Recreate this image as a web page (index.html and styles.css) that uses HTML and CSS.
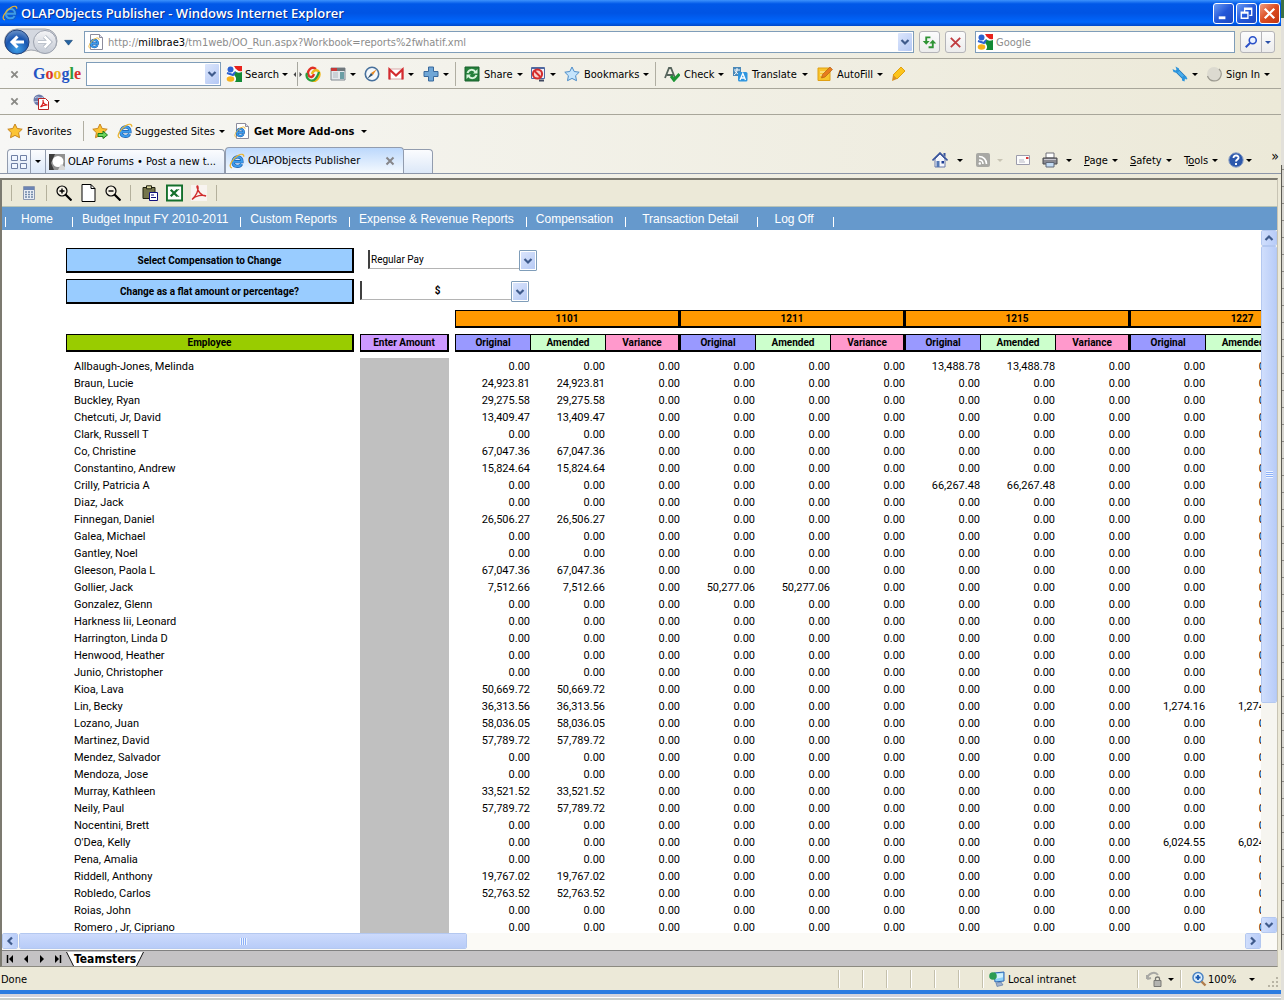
FILE: index.html
```html
<!DOCTYPE html>
<html lang="en">
<head>
    <meta charset="UTF-8">
    <title>OLAPObjects Publisher</title>
    <link rel="stylesheet" href="styles.css">
</head>
<body>
    <svg class="sprite" aria-hidden="true">
        <symbol id="i-ie" viewBox="0 0 16 16">
            <path d="M3.800 8.700h9.200c.3-6.400-8.700-6.400-9 0-.2 5.300 6.500 6 8.600 2.300" fill="none" stroke="#1c5cac" stroke-width="3.200"/>
            <path d="M3.800 8.700h9.200c.3-6.400-8.700-6.400-9 0-.2 5.300 6.500 6 8.600 2.300" fill="none" stroke="#3c9cec" stroke-width="2"/>
            <path d="M3 14.800C-1.500 14.500 3 6 9 2.500c3-1.800 6-1.800 5.800 1.200" fill="none" stroke="#ecb42c" stroke-width="1.200"/>
        </symbol>
        <symbol id="i-iepage" viewBox="0 0 16 16">
            <path d="M2.500.5h9l3 3v12h-12z" fill="#fff" stroke="#8c8c9c"/>
            <path d="M11.500.5v3h3" fill="#dde" stroke="#8c8c9c"/>
            <use href="#i-ie" x="0" y="3" width="12" height="12"/>
        </symbol>
        <symbol id="i-goog" viewBox="0 0 16 16">
            <path d="M1 1h14v14H1z" fill="#fff"/>
            <path d="M8 0h8v5c-3 1-6-1-8-5z" fill="#e8221c"/>
            <path d="M9 5c2 2 4 2 7 1v10H9c2-3 1-5-1-7z" fill="#128a36"/>
            <circle cx="4.500" cy="3.500" r="3" fill="#2b62d0"/>
            <path d="M1 7l6 2 2-3" fill="none" stroke="#2b62d0" stroke-width="2"/>
            <ellipse cx="4.500" cy="13" rx="3.800" ry="2.700" fill="#f6b21c"/>
        </symbol>
        <symbol id="i-star" viewBox="0 0 16 16">
            <path d="M8 1l2.200 4.500 5 .7-3.600 3.500.9 5L8 12.400l-4.500 2.300.9-5L.8 6.200l5-.7z"/>
        </symbol>
        <symbol id="i-x" viewBox="0 0 10 10">
            <path d="M1.500 1.500l7 7m0-7l-7 7" fill="none" stroke="currentColor" stroke-width="2"/>
        </symbol>
        <symbol id="i-chev" viewBox="0 0 10 10">
            <path d="M1.500 3L5 6.500 8.500 3" fill="none" stroke="#3f5b8c" stroke-width="2.200"/>
        </symbol>
    </svg>

    <div class="window">
        <header class="titlebar">
            <svg class="icon"><use href="#i-ie"/></svg>
            <h1>OLAPObjects Publisher - Windows Internet Explorer</h1>
            <button class="win-btn" aria-label="Minimize"><svg viewBox="0 0 20 20"><path d="M5 13h7v3H5z" fill="#fff"/></svg></button>
            <button class="win-btn" aria-label="Restore"><svg viewBox="0 0 20 20"><path d="M8 8V4.500h7.500V12H13M8 5.500h7.500M4.500 8.500h7V15h-7zM4.500 9.500h7" fill="none" stroke="#fff" stroke-width="1.400"/></svg></button>
            <button class="win-btn win-close" aria-label="Close"><svg viewBox="0 0 20 20"><path d="M5 5l10 10M15 5L5 15" fill="none" stroke="#fff" stroke-width="2.400"/></svg></button>
        </header>

        <div class="address-row">
            <div class="travel">
                <svg viewBox="0 0 56 28" aria-hidden="true">
                    <defs>
                        <radialGradient id="back-fill" cx=".5" cy=".8" r=".8"><stop offset="0" stop-color="#3fa0e8"/><stop offset=".6" stop-color="#1a56b0"/><stop offset="1" stop-color="#6d94c8"/></radialGradient>
                        <linearGradient id="fwd-fill" x2="0" y2="1"><stop offset="0" stop-color="#f4f4f6"/><stop offset="1" stop-color="#c4cad4"/></linearGradient>
                    </defs>
                    <path d="M14 1h28a12 12 0 010 24c-6 0-8-3-14-3s-8 4-14 4a12 12 0 010-25z" fill="#d4d8e0" stroke="#a0a4ac"/>
                    <circle cx="14" cy="14" r="12" fill="url(#back-fill)" stroke="#24447c"/>
                    <circle cx="42" cy="14" r="11.500" fill="url(#fwd-fill)" stroke="#9ca2ae"/>
                    <path d="M21 14H9m5.500-5.500L9 14l5.500 5.500" fill="none" stroke="#fff" stroke-width="3"/>
                    <path d="M35 14h12m-5.500-5.500L47 14l-5.500 5.500" fill="none" stroke="#a8b0bc" stroke-width="4"/>
                    <path d="M35 14h12m-5.500-5.500L47 14l-5.500 5.500" fill="none" stroke="#fff" stroke-width="2.500"/>
                </svg>
            </div>
            <button class="travel-menu" aria-label="Recent pages"><svg viewBox="0 0 10 8"><path d="M.5 1.500h9L5 7z" fill="#2464a4" stroke="#14406c" stroke-width=".6"/></svg></button>
            <div class="field address">
                <svg class="icon"><use href="#i-iepage"/></svg>
                <a class="url" href="#">http://<b>millbrae3</b>/tm1web/OO_Run.aspx?Workbook=reports%2fwhatif.xml</a>
                <button class="drop" aria-label="Show addresses"><svg><use href="#i-chev"/></svg></button>
            </div>
            <button class="tool-btn" aria-label="Refresh"><svg viewBox="0 0 16 16"><path d="M9 2.500H4.500V8M7 13h4.500V8" fill="none" stroke="#2f9434" stroke-width="2"/><path d="M.8 6.500h7.400L4.500 10.500zM7.800 9h7.400L11.500 5z" fill="#2f9434"/></svg></button>
            <button class="tool-btn" aria-label="Stop"><svg viewBox="0 0 16 16"><path d="M3 3l10 10M13 3L3 13" fill="none" stroke="#c03c40" stroke-width="2"/></svg></button>
            <label class="field search">
                <svg class="icon"><use href="#i-goog"/></svg>
                <input type="text" placeholder="Google" aria-label="Search Google">
            </label>
            <div class="search-go">
                <button aria-label="Search"><svg viewBox="0 0 16 16"><circle cx="10" cy="6" r="4" fill="#eaf2ff" stroke="#2a50c8" stroke-width="1.800"/><path d="M7 9l-5 5" stroke="#2a50c8" stroke-width="2.400"/></svg></button>
                <button aria-label="Search options"><i class="caret blue"></i></button>
            </div>
        </div>

        <div class="google-bar">
            <button class="close-x" aria-label="Close toolbar"><svg><use href="#i-x"/></svg></button>
            <span class="logo"><i class="b">G</i><i class="r">o</i><i class="y">o</i><i class="b">g</i><i class="g">l</i><i class="r">e</i></span>
            <div class="field google-field">
                <input type="text" aria-label="Google search">
                <button class="drop" aria-label="Search history"><svg><use href="#i-chev"/></svg></button>
            </div>
            <button class="item find"><svg class="icon"><use href="#i-goog"/></svg>Search<i class="caret"></i></button>
            <span class="grabber"><svg viewBox="0 0 10 24"><path d="M4.500 0v24" stroke="#a8a8a0"/><path d="M3 10v5L.5 12.500zM6.500 10v5L9 12.500z" fill="#444"/></svg></span>
            <button class="item" aria-label="Chrome"><svg class="icon" viewBox="0 0 16 16"><path d="M11 3C6-1 1 6 4 10c2 2 4 1 5-2" fill="none" stroke="#e03024" stroke-width="2.400"/><path d="M7 8c1-4 5-5 7-2 2 5-3 10-7 9" fill="none" stroke="#f0b818" stroke-width="2.400"/><path d="M2 7c-2 5 3 9 7 7 3-2 4-5 5-8" fill="none" stroke="#2a9c3c" stroke-width="2.200"/></svg></button>
            <button class="item" aria-label="Sidebar"><svg class="icon" viewBox="0 0 16 16"><path d="M1 2h14v12H1z" fill="#e4e8ec" stroke="#808890"/><path d="M1 2h14v3H1z" fill="#70787c"/><path d="M1 2h6v3H1z" fill="#c83838"/><path d="M10 6h4v7h-4z" fill="#6c9ea4"/><path d="M3 7h5M3 9h5M3 11h5" stroke="#b0b8c0"/></svg><i class="caret"></i></button>
            <button class="item" aria-label="Web history"><svg class="icon" viewBox="0 0 16 16"><circle cx="8" cy="8" r="6.700" fill="#f4f8fc" stroke="#47709c" stroke-width="1.600"/><path d="M12.500 3.500L9 9 7 7z" fill="#e88820"/><path d="M3.500 12.500L9 9 7 7z" fill="#30506c"/></svg></button>
            <button class="item" aria-label="Gmail"><svg class="icon" viewBox="0 0 16 16"><path d="M1 3h14v10H1z" fill="#fff" stroke="#d8a8a8"/><path d="M1.500 13.500V3.500L8 9.500l6.500-6v10" fill="none" stroke="#d42c30" stroke-width="2.200"/></svg><i class="caret"></i></button>
            <button class="item sep" aria-label="Add gadget"><svg class="icon" viewBox="0 0 16 16"><path d="M5.500 1h5v4.500H15v5h-4.500V15h-5v-4.500H1v-5h4.500z" fill="#6fa6d6" stroke="#39699c"/></svg><i class="caret"></i></button>
            <button class="item"><svg class="icon" viewBox="0 0 16 16"><path d="M1 1h14v14H1z" fill="#24803c" stroke="#18602c"/><path d="M3.500 7c1.500-4 6-4 8-1M12.500 9c-1.500 4-6 4-8 1" fill="none" stroke="#d8f4dc" stroke-width="2"/><path d="M13.500 3v4.500H9zM2.500 13V8.500H7z" fill="#d8f4dc"/></svg>Share<i class="caret"></i></button>
            <button class="item" aria-label="Popup blocker"><svg class="icon" viewBox="0 0 16 16"><path d="M1.500 1.500h13v11h-13z" fill="#f0f0f8" stroke="#5068a0"/><path d="M2 1h12v2H2z" fill="#5068a0"/><circle cx="7.500" cy="8" r="4.600" fill="#f8d0cc" stroke="#d42c2c" stroke-width="2"/><path d="M4.500 5l6 6" stroke="#d42c2c" stroke-width="2"/><path d="M9 14.500h5" stroke="#404860" stroke-width="2"/></svg><i class="caret"></i></button>
            <button class="item sep"><svg class="icon star-blue"><use href="#i-star"/></svg>Bookmarks<i class="caret"></i></button>
            <button class="item"><svg class="icon" viewBox="0 0 16 16"><path d="M1 12L5 2h2l4 10M3 9h6" fill="none" stroke="#56645c" stroke-width="1.800"/><path d="M7 10l3 4 5.500-6" fill="none" stroke="#1c9434" stroke-width="3"/></svg>Check<i class="caret"></i></button>
            <button class="item"><svg class="icon" viewBox="0 0 16 16"><path d="M1 1h8v9H1z" fill="#4a88b8"/><path d="M2 4h6M5 2v2c0 3-2 4-3 5M3 5c1 2 3 3 5 4" fill="none" stroke="#fff"/><rect x="6" y="6" width="9.500" height="9.500" rx="1.500" fill="#2e96e0"/><path d="M8 14l2.800-6.500L13.500 14M9 12h3.500" fill="none" stroke="#fff" stroke-width="1.300"/></svg>Translate<i class="caret"></i></button>
            <button class="item"><svg class="icon" viewBox="0 0 16 16"><path d="M1 2h12v12.500H1z" fill="#f8c42c" stroke="#e0a014"/><path d="M3 6h5M3 9h3" stroke="#fff4c0"/><path d="M4.500 12l1-3.500 7.500-7.500 2.500 2.500L8 11z" fill="#e87c1c" stroke="#a85810" stroke-width=".6"/></svg>AutoFill<i class="caret"></i></button>
            <button class="item" aria-label="Highlight"><svg class="icon" viewBox="0 0 16 16"><path d="M3 9l8-8 4 4-8 8z" fill="#fcc41c" stroke="#e0a010"/><path d="M3 9l4 4-5 2z" fill="#d89024"/></svg></button>
            <button class="item" aria-label="Options"><svg class="icon" viewBox="0 0 16 16"><path d="M5 4.500l7 7" stroke="#2474b4" stroke-width="4.500"/><path d="M5 4.500l7 7" stroke="#48acec" stroke-width="3"/><path d="M3.500.5l3.500 2v3L5 7 1.500 6 .5 3l3 1.500 1-1zM11 10h3l1.500 3-1.500.5-1-1-.5 3-2.500-1V12z" fill="#2c94dc"/></svg><i class="caret"></i></button>
            <button class="item"><svg class="icon" viewBox="0 0 16 16"><circle cx="8" cy="8" r="7" fill="#dcdad0"/><path d="M1.500 10A7 7 0 0014.500 11 7 7 0 0013 3" fill="none" stroke="#9c9a90" stroke-width="1.200"/></svg>Sign In<i class="caret"></i></button>
        </div>

        <div class="pdf-bar">
            <button class="close-x" aria-label="Close toolbar"><svg><use href="#i-x"/></svg></button>
            <button class="item" aria-label="Convert to PDF"><svg class="icon" viewBox="0 0 16 16"><circle cx="6" cy="6" r="5.500" fill="#6c7cac"/><path d="M2 4c3-3 5 2 8-1M1 8c3-1 5 0 8 0" fill="none" stroke="#c4d0e8"/><path d="M5.500 4.500h7l3 3v8h-10z" fill="#fff" stroke="#b82424"/><path d="M7.500 13c2-2 3-5 2.500-7 0 4 2 5 4.500 5-3 0-5 .5-7 2z" fill="none" stroke="#d81c1c" stroke-width="1.200"/></svg><i class="caret"></i></button>
        </div>

        <div class="favorites">
            <button class="item sep fav"><svg class="icon star-gold"><use href="#i-star"/></svg>Favorites</button>
            <button class="item" aria-label="Add to favorites"><svg class="icon star-gold" viewBox="0 0 16 16"><use href="#i-star" width="16" height="16"/><path d="M6 10.500h5V8l4.500 4-4.500 3.500v-2H6z" fill="#6cd45c" stroke="#1c7c1c"/></svg></button>
            <button class="item tight"><svg class="icon"><use href="#i-ie"/></svg>Suggested Sites<i class="caret"></i></button>
            <button class="item bold"><svg class="icon"><use href="#i-iepage"/></svg>Get More Add-ons<i class="caret"></i></button>
        </div>

        <div class="tab-row">
            <button class="quick-tabs" aria-label="Quick tabs"><svg viewBox="0 0 16 14"><path d="M.5.500h6v5h-6zM9.500.500h6v5h-6zM.5 8.500h6v5h-6zM9.500 8.500h6v5h-6z" fill="#f0f6ff" stroke="#7080a4"/></svg></button>
            <button class="tab-list" aria-label="Tab list"><i class="caret"></i></button>
            <a class="tab" href="#"><svg class="icon" viewBox="0 0 16 16"><path d="M0 0h16v16H0z" fill="#909090"/><path d="M0 0h6L2 9l3 7H0z" fill="#3c3c3c"/><circle cx="9" cy="7.500" r="5.500" fill="#fff"/><path d="M12 10l4 3v3H9z" fill="#d8d8d8"/></svg><span>OLAP Forums • Post a new t...</span></a>
            <a class="tab active" href="#"><svg class="icon"><use href="#i-ie"/></svg><span>OLAPObjects Publisher</span><svg class="tab-close"><use href="#i-x"/></svg></a>
            <button class="new-tab" aria-label="New tab"></button>
            <div class="commands">
                <button class="item" aria-label="Home"><svg class="icon" viewBox="0 0 16 16"><path d="M3 7v8h10V7L8 2z" fill="#f4f6fc" stroke="#6878a8"/><path d="M.5 8.500L8 1l7.500 7.500" fill="none" stroke="#38549c" stroke-width="1.600"/><path d="M11.500 1h2v4l-2-2z" fill="#38549c"/><path d="M4.500 9h3v6h-3z" fill="#5478b4"/><path d="M9.500 9h2.500v2.500H9.500z" fill="#1c3c94"/></svg><i class="caret"></i></button>
                <button class="item" aria-label="Feeds" disabled><svg class="icon" viewBox="0 0 16 16"><rect x="1" y="1" width="14" height="14" rx="2" fill="#a8a8a4"/><path d="M4 4.500c4.500 0 7.500 3 7.500 7.500M4 8c2.500 0 4 1.500 4 4" fill="none" stroke="#fff" stroke-width="1.600"/><circle cx="4.800" cy="11.500" r="1.200" fill="#fff"/></svg><i class="caret"></i></button>
                <button class="item" aria-label="Read mail"><svg class="icon" viewBox="0 0 16 16"><path d="M1.500 3.500h13v9h-13z" fill="#fcfcfc" stroke="#9c9cac"/><path d="M11 5h2.500v2H11z" fill="#d83434"/><path d="M4 8h5M4 10h6" stroke="#b8b8c4"/></svg></button>
                <button class="item" aria-label="Print"><svg class="icon" viewBox="0 0 16 16"><path d="M4 1h8v5H4z" fill="#fff" stroke="#707078"/><path d="M1 6h14v6H1z" fill="#888890" stroke="#48484c"/><path d="M2 7.500h12" stroke="#c8c8d0"/><path d="M4 10.500h8v4.500H4z" fill="#c4dcf4" stroke="#606878"/></svg><i class="caret"></i></button>
                <button class="item"><span><u>P</u>age</span><i class="caret"></i></button>
                <button class="item"><span><u>S</u>afety</span><i class="caret"></i></button>
                <button class="item"><span>T<u>o</u>ols</span><i class="caret"></i></button>
                <button class="item" aria-label="Help"><svg class="icon" viewBox="0 0 16 16"><circle cx="8" cy="8" r="7.200" fill="#2c58ac" stroke="#8ca0c4"/><path d="M5.500 6c0-3.500 5.500-3 5 0-.3 1.500-2.500 1.500-2.500 3.500M8 11v2" fill="none" stroke="#fff" stroke-width="1.900"/></svg><i class="caret"></i></button>
                <button class="more" aria-label="More commands">»</button>
            </div>
        </div>

        <main class="page">
            <div class="report-tools">
                <button class="rt-calc" aria-label="Recalculate"><svg class="icon" viewBox="0 0 16 16"><path d="M2.500 1.500h11v13h-11z" fill="#e8ecf4" stroke="#8c98b0"/><path d="M3 2h10v3H3z" fill="#6c84b4"/><path d="M4 7h8M4 9.500h8M4 12h8" stroke="#7088a8" stroke-width="1.500" stroke-dasharray="2 1"/></svg></button>
                <button aria-label="Zoom in"><svg class="icon" viewBox="0 0 16 16"><circle cx="6" cy="6" r="5" fill="#f4f0e4" stroke="#000" stroke-width="1.200"/><path d="M3.500 6h5M6 3.500v5" stroke="#000" stroke-width="1.400"/><path d="M9.500 9.500l6 6" stroke="#000" stroke-width="2.200"/></svg></button>
                <button aria-label="Actual size"><svg class="page-icon" viewBox="0 0 16 18"><path d="M1.500.5h9l4 4v13h-13z" fill="#fff" stroke="#000"/><path d="M10.500.5v4h4" fill="none" stroke="#000"/></svg></button>
                <button class="rt-out" aria-label="Zoom out"><svg class="icon" viewBox="0 0 16 16"><circle cx="6" cy="6" r="5" fill="#f4f0e4" stroke="#000" stroke-width="1.200"/><path d="M3.500 6h5" stroke="#000" stroke-width="1.400"/><path d="M9.500 9.500l6 6" stroke="#000" stroke-width="2.200"/></svg></button>
                <button aria-label="Paste"><svg class="icon" viewBox="0 0 16 16"><path d="M1 2.500h12v11H1z" fill="#74744c" stroke="#202010"/><path d="M4.500.8h5v3h-5z" fill="#d8d49c" stroke="#202010"/><path d="M7.500 7.500h8v8h-8z" fill="#fff" stroke="#10107c"/><path d="M9 10h3M9 12.500h5" stroke="#10107c"/></svg></button>
                <button aria-label="Export to Excel"><svg class="page-icon" viewBox="0 0 18 18"><path d="M1 1h16v16H1z" fill="#fff" stroke="#14702c" stroke-width="2"/><path d="M5 5.500l7 7M12 5.500l-7 7" stroke="#14702c" stroke-width="2.400"/><path d="M12 12.500h2M12 5.500h2" stroke="#14702c"/></svg></button>
                <button class="rt-pdf" aria-label="Export to PDF"><svg class="icon" viewBox="0 0 16 16"><path d="M0 0h16v16H0z" fill="#f8f4f0"/><path d="M1 14.500C5 11 8 5 7 1.500c-.2-1-1.300-.8-1 .5C6.800 6 10 11 15 11c-4-1.500-10-.5-14 3.500z" fill="none" stroke="#d02c2c" stroke-width="1.400"/></svg></button>
            </div>
            <nav class="menu">
                <a class="wide" href="#">Home</a>
                <a href="#">Budget Input FY 2010-2011</a>
                <a href="#">Custom Reports</a>
                <a href="#">Expense &amp; Revenue Reports</a>
                <a href="#">Compensation</a>
                <a class="wide" href="#">Transaction Detail</a>
                <a class="wide" href="#">Log Off</a>
            </nav>

            <div class="sheet-area">
                <div class="sheet">
                    <div class="filter">
                        <label for="comp">Select Compensation to Change</label>
                        <div class="picker inset">
                            <select id="comp"><option>Regular Pay</option></select>
                            <span class="drop"><svg><use href="#i-chev"/></svg></span>
                        </div>
                    </div>
                    <div class="filter">
                        <label for="mode">Change as a flat amount or percentage?</label>
                        <div class="picker centered">
                            <select id="mode"><option>$</option></select>
                            <span class="drop"><svg><use href="#i-chev"/></svg></span>
                        </div>
                    </div>
                    <table>
                        <colgroup>
                            <col class="c-name"><col class="c-gap"><col class="c-amount"><col class="c-gap">
                            <col span="12" class="c-value">
                        </colgroup>
                        <thead>
                            <tr class="years" id="years"><td colspan="4"></td></tr>
                            <tr class="space"><td colspan="16"></td></tr>
                            <tr class="heads" id="heads">
                                <th class="employee boxed">Employee</th><td></td>
                                <th class="enter boxed">Enter Amount</th><td></td>
                            </tr>
                            <tr class="space"><td colspan="16"></td></tr>
                        </thead>
                        <tbody id="rows"></tbody>
                    </table>
                </div>
                <div class="vscroll">
                    <button aria-label="Scroll up"><svg viewBox="0 0 10 10"><path d="M1.500 7L5 3.500 8.500 7" fill="none" stroke="#3f5b8c" stroke-width="2.200"/></svg></button>
                    <div class="thumb"><i></i></div>
                    <button aria-label="Scroll down"><svg><use href="#i-chev"/></svg></button>
                </div>
            </div>
            <div class="hscroll">
                <button aria-label="Scroll left"><svg viewBox="0 0 10 10"><path d="M7 1.500L3.500 5 7 8.500" fill="none" stroke="#3f5b8c" stroke-width="2.200"/></svg></button>
                <div class="thumb"><i></i></div>
                <button aria-label="Scroll right"><svg viewBox="0 0 10 10"><path d="M3 1.500L6.500 5 3 8.500" fill="none" stroke="#3f5b8c" stroke-width="2.200"/></svg></button>
            </div>
            <div class="sheet-tabs">
                <button aria-label="First sheet"><svg viewBox="0 0 8 8"><path d="M1.500 0v8" stroke="#000" stroke-width="1.500"/><path d="M7 0v8L3 4z"/></svg></button>
                <button aria-label="Previous sheet"><svg viewBox="0 0 8 8"><path d="M6 0v8L2 4z"/></svg></button>
                <button aria-label="Next sheet"><svg viewBox="0 0 8 8"><path d="M2 0v8l4-4z"/></svg></button>
                <button aria-label="Last sheet"><svg viewBox="0 0 8 8"><path d="M6.500 0v8" stroke="#000" stroke-width="1.500"/><path d="M1 0v8l4-4z"/></svg></button>
                <a href="#"><svg viewBox="0 0 8 14"><path d="M0 0h8v14H7z" fill="#fff"/><path d="M.5 0l7 14" stroke="#000"/></svg><span>Teamsters</span><svg viewBox="0 0 8 14"><path d="M0 0h8L1 14H0z" fill="#fff"/><path d="M7.500 0l-7 14" stroke="#000"/></svg></a>
            </div>
        </main>

        <footer class="status">
            <span class="done">Done</span>
            <i class="cell"></i><i class="cell"></i><i class="cell"></i><i class="cell"></i><i class="cell"></i><i class="cell"></i>
            <span class="zone"><svg class="icon" viewBox="0 0 16 16"><path d="M5 2l10-1v9l-9 1z" fill="#8cd0f8" stroke="#2c64b4"/><path d="M6 3l8-.8v4L6 8z" fill="#d0f0fc"/><circle cx="4" cy="5" r="3.800" fill="#2c9c54"/><path d="M7 12l5-1 2 3-6 1.500z" fill="#9cb0d0" stroke="#5070a0" stroke-width=".6"/></svg>Local intranet</span>
            <button class="protect" aria-label="Protected mode"><svg class="icon" viewBox="0 0 16 16"><path d="M1 8c1-6 8-8 11-4M1 8l4-1M1 8V4" fill="none" stroke="#a8a8a4" stroke-width="2"/><path d="M8 9.500h7v6H8z" fill="#b4b4b0" stroke="#787874"/><path d="M9.500 9.500V7.500c0-2 4-2 4 0v2" fill="none" stroke="#787874" stroke-width="1.300"/></svg><i class="caret"></i></button>
            <button class="zoom"><svg class="icon" viewBox="0 0 16 16"><circle cx="7" cy="6.500" r="5" fill="#dceefc" stroke="#4c84c4" stroke-width="1.500"/><path d="M4.500 6.500h5M7 4v5" stroke="#1858b0" stroke-width="1.800"/><path d="M10.500 10.500l4 4" stroke="#b07c4c" stroke-width="2.400"/></svg>100%<i class="caret"></i></button>
            <svg class="grip" viewBox="0 0 12 12"><path d="M9 1h2v2H9zM5 5h2v2H5zM9 5h2v2H9zM1 9h2v2H1zM5 9h2v2H5zM9 9h2v2H9z" fill="#b8b4a4"/></svg>
        </footer>
        <div class="window-edge"></div>
    </div>
    <div class="behind"></div>

    <script src="sheet.js"></script>
</body>
</html>
```

FILE: styles.css
```css
* {
    box-sizing: border-box;
}

body {
    margin: 0;
    height: 100vh;
    display: flex;
    overflow: hidden;
    background: #d8d8d8;
    color: #000;
    font-family: "DejaVu Sans Condensed", "DejaVu Sans", sans-serif;
    font-size: 11px;
}

button,
input,
select {
    margin: 0;
    padding: 0;
    border: 0;
    background: none;
    color: inherit;
    font: inherit;
}

a {
    color: inherit;
    text-decoration: none;
}

.sprite {
    position: absolute;
    width: 0;
    height: 0;
}

.icon {
    width: 16px;
    height: 16px;
    flex: none;
}

.caret {
    flex: none;
    border: 3px solid transparent;
    border-top-color: #000;
    border-bottom: 0;
}

.caret.blue {
    border-top-color: #2a50a8;
}

.star-gold {
    fill: #fcc434;
    stroke: #c8841c;
}

.star-blue {
    fill: #c4e4fc;
    stroke: #4c8cc8;
}

.window {
    flex: 1;
    min-width: 0;
    display: flex;
    flex-direction: column;
    background: linear-gradient(90deg, #f7f7f5, #ece9d8);
}

/* title bar */
.titlebar {
    flex: none;
    height: 26px;
    padding: 0 1px 0 2px;
    display: flex;
    align-items: center;
    gap: 2px;
    background: linear-gradient(#3c92fc, #0058e8 15%, #0054e4 50%, #0066fc 85%, #0048c8);
    color: #fff;
}

.titlebar h1 {
    flex: 1;
    margin: 0 0 0 1px;
    font-family: "Open Sans", sans-serif;
    font-size: 13px;
    font-weight: 600;
    text-shadow: 1px 1px #0a2c8c;
}

.win-btn {
    width: 21px;
    height: 21px;
    border: 1px solid #fff;
    border-radius: 3px;
    background: linear-gradient(135deg, #6c9cf4, #2458d8 50%, #1c48c0);
}

.win-btn svg {
    display: block;
    width: 19px;
    height: 19px;
}

.win-close {
    background: linear-gradient(135deg, #f09c80, #dc4c20 50%, #c03410);
}

/* address bar */
.address-row {
    flex: none;
    height: 33px;
    padding: 0 6px 0 3px;
    display: flex;
    align-items: center;
    gap: 5px;
    border-bottom: 1px solid #a8a69a;
}

.travel svg {
    display: block;
    width: 56px;
    height: 28px;
}

.travel-menu {
    width: 15px;
}

.travel-menu svg {
    display: block;
    width: 9px;
    height: 7px;
}

.field {
    display: flex;
    align-items: center;
    height: 22px;
    padding: 1px;
    border: 1px solid #7f9db9;
    background: #fff;
}

.field input {
    flex: 1;
    min-width: 0;
    outline: 0;
}

.field input::placeholder {
    color: #8c8c8c;
    opacity: 1;
}

.address {
    flex: 1;
    padding-left: 3px;
}

.url {
    flex: 1;
    padding-left: 4px;
    color: #8c8c8c;
}

.url b {
    color: #000;
    font-weight: 400;
}

.drop {
    width: 14px;
    height: 18px;
    display: flex;
    align-items: center;
    justify-content: center;
    border-radius: 1px;
    background: linear-gradient(135deg, #dce6fc, #b4c8f4);
}

.drop svg {
    width: 10px;
    height: 10px;
}

.tool-btn,
.search-go {
    height: 22px;
    border: 1px solid #b4b4b8;
    border-radius: 3px;
    background: linear-gradient(#fcfcfc, #ececec);
}

.tool-btn {
    width: 21px;
}

.tool-btn svg {
    display: block;
    width: 15px;
    height: 15px;
    margin: auto;
}

.search {
    width: 260px;
    margin: 0 0 0 4px;
    gap: 3px;
}

.search-go {
    width: 35px;
    display: flex;
}

.search-go button {
    flex: 1;
    display: flex;
    align-items: center;
    justify-content: center;
}

.search-go button:first-child {
    flex: 0 0 21px;
    border-right: 1px solid #b4b4b8;
}

.search-go svg {
    width: 14px;
    height: 14px;
}

/* toolbars */
.item {
    display: flex;
    align-items: center;
    gap: 4px;
    padding-right: 9px;
    white-space: nowrap;
}

.item .caret {
    margin-left: auto;
}

.item.sep {
    margin-right: 8px;
    padding-right: 8px;
    border-right: 1px solid #b0aea2;
}

.item.find {
    gap: 3px;
    padding-right: 5px;
}

.close-x {
    padding-left: 2px;
    color: #8a8a86;
    text-align: left;
}

.close-x svg {
    display: block;
    width: 9px;
    height: 9px;
}

.google-bar {
    flex: none;
    height: 30px;
    padding: 3px 3px 3px 8px;
    display: grid;
    grid-template-columns: 25px 53px 140px 67px 12px 25px 34px 24px 35px 41px 66px 34px 100px 68px 85px 73px 1fr 34px 72px;
    align-items: center;
    border-bottom: 1px solid #a8a69a;
}

.google-bar .item,
.favorites .item {
    height: 24px;
}

.logo {
    font-family: "Liberation Serif", serif;
    font-size: 16px;
    font-weight: 700;
    line-height: 20px;
}

.logo i {
    font-style: normal;
}

.logo .b {
    color: #2454c4;
}

.logo .r {
    color: #d8302c;
}

.logo .y {
    color: #ecb01c;
}

.logo .g {
    color: #2c9c3c;
}

.google-field {
    width: 135px;
    height: 24px;
}

.google-field .drop {
    height: 20px;
}

.grabber svg {
    display: block;
    width: 10px;
    height: 24px;
}

.pdf-bar {
    flex: none;
    height: 26px;
    padding-left: 8px;
    display: grid;
    grid-template-columns: 25px 36px;
    align-items: center;
    border-bottom: 1px solid #a8a69a;
}

.favorites {
    flex: none;
    height: 32px;
    padding-left: 7px;
    display: grid;
    grid-template-columns: 85px 25px 117px 142px;
    align-items: center;
}

.favorites .fav {
    height: 20px;
}

.favorites .tight {
    gap: 2px;
}

.favorites .bold {
    font-weight: 700;
}

/* browser tabs */
.tab-row {
    flex: none;
    height: 27px;
    padding-left: 7px;
    display: flex;
    align-items: flex-end;
    border-bottom: 1px solid #8c96a8;
}

.quick-tabs,
.tab-list,
.new-tab,
.tab {
    height: 24px;
    display: flex;
    align-items: center;
    border: 1px solid #929cae;
    border-bottom: 0;
    background: linear-gradient(#fbfcfe, #dce8f8);
}

.quick-tabs {
    width: 24px;
    justify-content: center;
    border-radius: 4px 0 0 0;
}

.quick-tabs svg {
    width: 16px;
    height: 14px;
}

.tab-list {
    width: 15px;
    justify-content: center;
    border-left: 0;
}

.tab {
    width: 179px;
    padding: 0 8px 0 3px;
    gap: 3px;
    border-left: 0;
    border-radius: 0 4px 0 0;
    white-space: nowrap;
}

.tab span {
    flex: 1;
}

.tab.active {
    height: 26px;
    border-left: 1px solid #929cae;
    border-radius: 4px 4px 0 0;
    background: linear-gradient(#bcd8fc, #f4f9fe);
}

.tab-close {
    width: 10px;
    height: 10px;
    color: #86868a;
}

.new-tab {
    width: 29px;
    border-left: 0;
    border-radius: 0 4px 0 0;
}

.commands {
    margin-left: auto;
    padding-right: 2px;
    display: grid;
    grid-template-columns: 43px 40px 27px 42px 46px 54px 44px 31px 20px;
    align-self: center;
}

.commands .item {
    padding-right: 12px;
}

.commands .item:nth-child(8) {
    gap: 2px;
    padding-right: 7px;
}

.commands :disabled .caret {
    border-top-color: #c8c4b4;
}

.more {
    align-self: start;
    font-size: 14px;
    line-height: 8px;
    text-align: right;
}

/* page frame */
.page {
    flex: 1;
    min-height: 0;
    margin: 4px 3px 0 0;
    display: flex;
    flex-direction: column;
    border: 2px solid #7c7a70;
    border-right: 1px solid #c8c4b4;
    border-bottom: 1px solid #8c8a80;
    background: #fff;
}

.report-tools {
    flex: none;
    height: 27px;
    padding-left: 9px;
    display: flex;
    align-items: center;
    gap: 8px;
    background: #ece9d8;
    border-bottom: 1px solid #b8c4b8;
}

.report-tools button {
    display: flex;
    align-items: center;
}

.report-tools .rt-calc {
    height: 16px;
    margin-right: 1px;
    padding: 0 9px;
    border: 1px solid #b4b09c;
    border-width: 0 1px;
}

.report-tools .rt-out {
    padding-right: 9px;
    margin-right: 3px;
    border-right: 1px solid #b4b09c;
}

.report-tools .rt-pdf {
    padding-right: 9px;
    border-right: 1px solid #b4b09c;
}

.page-icon {
    width: 17px;
    height: 18px;
}

.menu {
    flex: none;
    height: 23px;
    padding: 3px 0 2px 3px;
    display: flex;
    align-items: center;
    background: #6699cc;
    color: #fff;
    font-family: "Liberation Sans", sans-serif;
    font-size: 12px;
    line-height: 18px;
    white-space: nowrap;
}

.menu a {
    padding: 0 13px 0 9px;
    background: linear-gradient(#fff, #fff) right 7px / 1px 10px no-repeat;
}

.menu .wide {
    padding: 0 20px 0 16px;
}

.menu a:first-child {
    background-image: linear-gradient(#fff, #fff), linear-gradient(#fff, #fff);
    background-position: right 7px, left 7px;
    background-size: 1px 10px;
}

/* spreadsheet */
.sheet-area {
    flex: 1;
    min-height: 0;
    display: flex;
}

.sheet {
    flex: 1;
    min-width: 0;
    padding: 18px 0 0 64px;
    overflow: hidden;
    font-family: Roboto, "Liberation Sans", sans-serif;
    font-size: 11px;
}

.filter {
    display: flex;
    align-items: center;
    margin-bottom: 6px;
}

.filter label {
    width: 288px;
    height: 25px;
    border: 1px solid #000;
    border-width: 1px 2px 2px 1px;
    background: #99ccff;
    font-size: 10px;
    font-weight: 700;
    line-height: 23px;
    text-align: center;
}

.picker {
    position: relative;
    width: 169px;
    height: 21px;
    margin-left: 6px;
}

.picker.inset {
    margin-left: 14px;
}

.picker select {
    width: 152px;
    height: 19px;
    padding: 1px 0 0 1px;
    appearance: none;
    border: 1px solid #b4b4b4;
    border-width: 0 0 1px 2px;
    border-left-color: #404040;
    font-size: 10px;
}

.picker.centered select {
    font-weight: 700;
    text-align: center;
    text-align-last: center;
}

.picker .drop {
    position: absolute;
    top: 0;
    right: 0;
    width: 18px;
    height: 21px;
    border: 1px solid #7f9db9;
    box-shadow: inset 0 0 0 1px #fff;
    pointer-events: none;
}

table {
    width: 1289px;
    table-layout: fixed;
    border-collapse: separate;
    border-spacing: 0;
}

td,
th {
    padding: 0;
    white-space: nowrap;
}

.c-name {
    width: 288px;
}

.c-gap {
    width: 6px;
}

.c-amount {
    width: 89px;
}

.c-value {
    width: 75px;
}

.space td {
    height: 6px;
}

th {
    height: 18px;
    border: 1px solid #000;
    border-width: 1px 0 2px 1px;
    font-size: 10px;
    line-height: 15px;
}

th.boxed,
th.last {
    border-right-width: 2px;
}

.years th {
    background: #ff9900;
}

.employee {
    background: #99cc00;
}

.enter {
    background: #cc99ff;
}

.original {
    background: #9999ff;
}

.amended {
    background: #ccffcc;
}

.variance {
    background: #ff99cc;
}

tbody td {
    height: 17px;
    line-height: 17px;
    text-align: right;
}

tbody .name {
    padding-left: 8px;
    text-align: left;
}

tbody .amount {
    background: #c0c0c0;
}

/* scrollbars */
.vscroll,
.hscroll {
    display: flex;
    background: #f6f5f0;
}

.vscroll {
    width: 16px;
    flex-direction: column;
}

.hscroll {
    flex: none;
    height: 17px;
    padding-right: 16px;
    background: #fbfaf6;
}

.vscroll button,
.hscroll button,
.thumb {
    flex: none;
    width: 16px;
    height: 16px;
    display: flex;
    align-items: center;
    justify-content: center;
    border: 1px solid #fff;
    border-radius: 2px;
    outline: 1px solid #b4c8f0;
    outline-offset: -1px;
    background: linear-gradient(90deg, #d0defc, #b8ccf8);
}

.vscroll svg,
.hscroll svg {
    width: 10px;
    height: 10px;
}

.vscroll .thumb {
    height: 65%;
}

.hscroll .thumb {
    width: 448px;
    margin-left: 1px;
    background: linear-gradient(#ccdafc, #b8ccf8);
}

.vscroll button:last-child {
    margin-top: auto;
}

.hscroll button:last-child {
    margin-left: auto;
}

.thumb i {
    width: 7px;
    height: 7px;
    background: repeating-linear-gradient(#eef4fe 0 1px, #8cb0f8 1px 2px);
}

.hscroll .thumb i {
    background: repeating-linear-gradient(90deg, #eef4fe 0 1px, #8cb0f8 1px 2px);
}

.sheet-tabs {
    flex: none;
    height: 16px;
    display: flex;
    align-items: center;
    border-top: 1px solid #808080;
    background: #c4c2c4;
}

.sheet-tabs button {
    width: 16px;
    height: 14px;
    display: flex;
    align-items: center;
    justify-content: center;
}

.sheet-tabs button svg {
    width: 8px;
    height: 8px;
}

.sheet-tabs a {
    height: 14px;
    display: flex;
    font-size: 12px;
    font-weight: 700;
    line-height: 14px;
}

.sheet-tabs a span {
    background: #fff;
}

.sheet-tabs a svg {
    width: 8px;
    height: 14px;
}

/* status bar */
.status {
    flex: none;
    height: 23px;
    padding: 3px 2px 2px 1px;
    display: flex;
    align-items: center;
    background: #ece9d8;
}

.done {
    flex: 1;
}

.cell,
.zone,
.protect,
.zoom {
    height: 18px;
    border-left: 1px solid #c4c0ac;
    box-shadow: inset 1px 0 #fff;
}

.cell {
    width: 24px;
}

.zone,
.protect,
.zoom {
    display: flex;
    align-items: center;
    gap: 3px;
    padding: 0 6px;
    white-space: nowrap;
}

.zone {
    width: 155px;
}

.protect {
    width: 43px;
    padding-left: 8px;
}

.protect .caret,
.zoom .caret {
    margin-left: auto;
}

.zoom {
    width: 87px;
    padding: 0 12px 0 10px;
    gap: 1px;
}

.grip {
    width: 12px;
    height: 12px;
    align-self: flex-end;
}

.window-edge {
    flex: none;
    height: 10px;
    background: linear-gradient(#2c7ce0 0 4px, #d4d4dc 4px 7px, #fff 7px 8px, #ccd0cc 8px);
}

/* sliver of the window underneath */
.behind {
    flex: none;
    width: 3px;
    background:
        linear-gradient(#3c7044 0 18px, #e2e0da 18px 165px, transparent 165px 950px, #e2e0da 950px),
        linear-gradient(90deg, #5c5a54 0 1px, transparent 1px),
        repeating-linear-gradient(#d8d6d0 0 16px, #8c8a84 16px 17px);
}
```

FILE: sheet.js
```js
const years = ['1101', '1211', '1215', '1227'];
const heads = ['Original', 'Amended', 'Variance'];

// name, then the budget per year; anything left out is zero
const employees = [
    ['Allbaugh-Jones, Melinda', { 1215: '13,488.78' }],
    ['Braun, Lucie', { 1101: '24,923.81' }],
    ['Buckley, Ryan', { 1101: '29,275.58' }],
    ['Chetcuti, Jr, David', { 1101: '13,409.47' }],
    ['Clark, Russell T', {}],
    ['Co, Christine', { 1101: '67,047.36' }],
    ['Constantino, Andrew', { 1101: '15,824.64' }],
    ['Crilly, Patricia A', { 1215: '66,267.48' }],
    ['Diaz, Jack', {}],
    ['Finnegan, Daniel', { 1101: '26,506.27' }],
    ['Galea, Michael', {}],
    ['Gantley, Noel', {}],
    ['Gleeson, Paola L', { 1101: '67,047.36' }],
    ['Gollier, Jack', { 1101: '7,512.66', 1211: '50,277.06' }],
    ['Gonzalez, Glenn', {}],
    ['Harkness Iii, Leonard', {}],
    ['Harrington, Linda D', {}],
    ['Henwood, Heather', {}],
    ['Junio, Christopher', {}],
    ['Kioa, Lava', { 1101: '50,669.72' }],
    ['Lin, Becky', { 1101: '36,313.56', 1227: '1,274.16' }],
    ['Lozano, Juan', { 1101: '58,036.05' }],
    ['Martinez, David', { 1101: '57,789.72' }],
    ['Mendez, Salvador', {}],
    ['Mendoza, Jose', {}],
    ['Murray, Kathleen', { 1101: '33,521.52' }],
    ['Neily, Paul', { 1101: '57,789.72' }],
    ['Nocentini, Brett', {}],
    ["O'Dea, Kelly", { 1227: '6,024.55' }],
    ['Pena, Amalia', {}],
    ['Riddell, Anthony', { 1101: '19,767.02' }],
    ['Robledo, Carlos', { 1101: '52,763.52' }],
    ['Roias, John', {}],
    ['Romero , Jr, Cipriano', {}]
];

function addCell(row, tag, text, className) {
    const cell = document.createElement(tag);
    cell.textContent = text;
    if (className) {
        cell.className = className;
    }
    row.appendChild(cell);
    return cell;
}

years.forEach(year => {
    addCell(document.getElementById('years'), 'th', year, 'last').colSpan = 3;
    heads.forEach(head => {
        const last = head === 'Variance' ? ' last' : '';
        addCell(document.getElementById('heads'), 'th', head, head.toLowerCase() + last);
    });
});

employees.forEach(([name, budget]) => {
    const row = document.createElement('tr');
    addCell(row, 'td', name, 'name');
    addCell(row, 'td', '');
    addCell(row, 'td', '', 'amount');
    addCell(row, 'td', '');
    years.forEach(year => {
        const value = budget[year] || '0.00';
        addCell(row, 'td', value);
        addCell(row, 'td', value);
        addCell(row, 'td', '0.00');
    });
    document.getElementById('rows').appendChild(row);
});
```
